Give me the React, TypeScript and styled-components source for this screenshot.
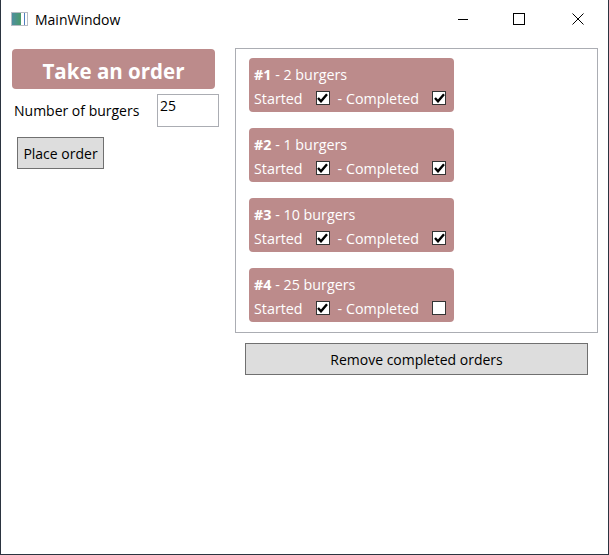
import React from "react";
import styled, { createGlobalStyle } from "styled-components";

const GlobalStyle = createGlobalStyle`
  html, body {
    margin: 0;
    padding: 0;
    background: #ffffff;
  }
  body {
    font-family: "Open Sans", "Noto Sans", sans-serif;
  }
`;

const Window = styled.div`
  width: 609px;
  height: 555px;
  box-sizing: border-box;
  border: 1px solid #2b3440;
  border-top: none;
  background: #ffffff;
  display: flex;
  flex-direction: column;
`;

const TitleBar = styled.div`
  height: 38px;
  display: flex;
  align-items: center;
  flex-shrink: 0;
`;

const AppIcon = styled.div`
  width: 15px;
  height: 12px;
  margin-left: 10px;
  margin-right: 7px;
  border: 1px solid #b8bcc4;
  background: linear-gradient(90deg, #4f8fa0 0, #4a9a6a 60%, #ffffff 60%, #ffffff 80%, #4f7fc0 80%, #4f7fc0 86%, #ffffff 86%);
`;

const Title = styled.span`
  font-size: 14px;
  color: #000;
  flex: 1;
`;

const CaptionButton = styled.div<{ $w: number }>`
  width: ${(p) => p.$w}px;
  height: 38px;
  display: flex;
  align-items: center;
  justify-content: center;
`;

const Content = styled.div`
  flex: 1;
  display: flex;
  padding: 10px 10px 0 11px;
  gap: 16px;
`;

const LeftColumn = styled.div`
  width: 207px;
  display: flex;
  flex-direction: column;
  padding-top: 1px;
`;

const Banner = styled.div`
  height: 40px;
  width: 203px;
  box-sizing: border-box;
  padding-top: 3px;
  border-radius: 4px;
  background: #bc8b8b;
  color: #ffffff;
  font-size: 20.5px;
  font-weight: 700;
  display: flex;
  align-items: center;
  justify-content: center;
`;

const FieldRow = styled.div`
  display: flex;
  align-items: center;
  justify-content: space-between;
  margin-top: 5px;
  padding-left: 2px;
`;

const Label = styled.span`
  font-size: 14px;
  color: #000;
`;

const TextBox = styled.div`
  width: 62px;
  height: 33px;
  box-sizing: border-box;
  border: 1px solid #abadb3;
  padding: 1px 2px;
  font-size: 14px;
  color: #000;
`;

const Button = styled.div<{ $wide?: boolean }>`
  height: 32px;
  box-sizing: border-box;
  border: 1px solid #707070;
  background: #dddddd;
  font-size: 14px;
  color: #000;
  display: flex;
  align-items: center;
  justify-content: center;
  ${(p) => (p.$wide ? "width: 343px; margin: 10px 0 0 10px;" : "width: 87px; margin: 10px 0 0 5px;")}
`;

const RightColumn = styled.div`
  width: 363px;
  display: flex;
  flex-direction: column;
`;

const OrderList = styled.div`
  height: 285px;
  box-sizing: border-box;
  border: 1px solid #abadb3;
  padding: 9px 13px;
  display: flex;
  flex-direction: column;
  gap: 16px;
`;

const OrderCard = styled.div`
  width: 205px;
  height: 54px;
  box-sizing: border-box;
  border-radius: 4px;
  background: #bc8b8b;
  color: #ffffff;
  padding: 5px 5px 3px;
  font-size: 14.3px;
  display: flex;
  flex-direction: column;
  justify-content: space-between;
`;

const OrderLine = styled.div`
  display: flex;
  align-items: center;
  height: 22px;
  white-space: nowrap;
`;

const Box = styled.span`
  width: 14px;
  height: 14px;
  flex-shrink: 0;
  box-sizing: border-box;
  border: 1px solid #333333;
  background: #ffffff;
  display: inline-flex;
  align-items: center;
  justify-content: center;
  margin: -1px 8px 0 13px;
`;

const CheckBox = ({ checked }: { checked: boolean }) => (
  <Box>
    {checked && (
      <svg width="11" height="10" viewBox="0 0 11 10">
        <path d="M1 5 L4 8.3 L10 1.3" fill="none" stroke="#000" strokeWidth="2.4" />
      </svg>
    )}
  </Box>
);

const orders = [
  { id: 1, count: 2, started: true, completed: true },
  { id: 2, count: 1, started: true, completed: true },
  { id: 3, count: 10, started: true, completed: true },
  { id: 4, count: 25, started: true, completed: false },
];

const App = () => {
  return (
    <>
      <GlobalStyle />
      <Window>
        <TitleBar>
          <AppIcon />
          <Title>MainWindow</Title>
          <CaptionButton $w={54}>
            <svg width="12" height="12" viewBox="0 0 12 12">
              <path d="M1 6.5 H11" stroke="#000" strokeWidth="1" />
            </svg>
          </CaptionButton>
          <CaptionButton $w={58}>
            <svg width="12" height="12" viewBox="0 0 12 12">
              <rect x="0.5" y="0.5" width="11" height="11" fill="none" stroke="#000" strokeWidth="1" />
            </svg>
          </CaptionButton>
          <CaptionButton $w={60}>
            <svg width="12" height="12" viewBox="0 0 12 12">
              <path d="M0.5 0.5 L11.5 11.5 M11.5 0.5 L0.5 11.5" stroke="#000" strokeWidth="1" />
            </svg>
          </CaptionButton>
        </TitleBar>
        <Content>
          <LeftColumn>
            <Banner>Take an order</Banner>
            <FieldRow>
              <Label>Number of burgers</Label>
              <TextBox>25</TextBox>
            </FieldRow>
            <Button>Place order</Button>
          </LeftColumn>
          <RightColumn>
            <OrderList>
              {orders.map((o) => (
                <OrderCard key={o.id}>
                  <OrderLine>
                    <b>#{o.id}</b>&nbsp;- {o.count} burgers
                  </OrderLine>
                  <OrderLine>
                    <span>Started</span>
                    <CheckBox checked={o.started} />
                    <span>- Completed</span>
                    <CheckBox checked={o.completed} />
                  </OrderLine>
                </OrderCard>
              ))}
            </OrderList>
            <Button $wide>Remove completed orders</Button>
          </RightColumn>
        </Content>
      </Window>
    </>
  );
};

export default App;
